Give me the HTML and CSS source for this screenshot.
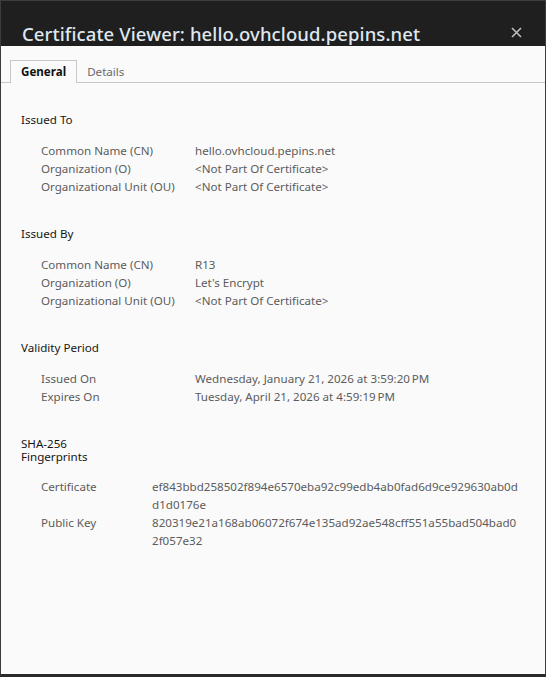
FILE: index.html
```html
<!DOCTYPE html>
<html>
<head>
<meta charset="utf-8">
<link rel="stylesheet" href="styles.css">
</head>
<body>
<div class="window">
  <header class="titlebar">
    <h1 class="title">Certificate Viewer: hello.ovhcloud.pepins.net</h1>
    <svg class="close" width="11" height="11" viewBox="0 0 11 11"><path d="M1 1 L10 10 M10 1 L1 10" stroke="#bdbdbd" stroke-width="1.6" fill="none"/></svg>
  </header>
  <nav class="tabs">
    <div class="tab active">General</div>
    <div class="tab">Details</div>
  </nav>
  <main class="content">
    <section class="section">
      <h2 class="heading">Issued To</h2>
      <dl class="grid">
        <dt>Common Name (CN)</dt><dd>hello.ovhcloud.pepins.net</dd>
        <dt>Organization (O)</dt><dd>&lt;Not Part Of Certificate&gt;</dd>
        <dt>Organizational Unit (OU)</dt><dd>&lt;Not Part Of Certificate&gt;</dd>
      </dl>
    </section>
    <section class="section">
      <h2 class="heading">Issued By</h2>
      <dl class="grid">
        <dt>Common Name (CN)</dt><dd>R13</dd>
        <dt>Organization (O)</dt><dd>Let's Encrypt</dd>
        <dt>Organizational Unit (OU)</dt><dd>&lt;Not Part Of Certificate&gt;</dd>
      </dl>
    </section>
    <section class="section">
      <h2 class="heading">Validity Period</h2>
      <dl class="grid">
        <dt>Issued On</dt><dd>Wednesday, January 21, 2026 at 3:59:20&#8239;PM</dd>
        <dt>Expires On</dt><dd>Tuesday, April 21, 2026 at 4:59:19&#8239;PM</dd>
      </dl>
    </section>
    <section class="section fp">
      <h2 class="heading narrow">SHA-256 Fingerprints</h2>
      <dl class="grid hashes">
        <dt>Certificate</dt><dd>ef843bbd258502f894e6570eba92c99edb4ab0fad6d9ce929630ab0dd1d0176e</dd>
        <dt>Public Key</dt><dd>820319e21a168ab06072f674e135ad92ae548cff551a55bad504bad02f057e32</dd>
      </dl>
    </section>
  </main>
</div>
</body>
</html>
```

FILE: styles.css
```css
* { box-sizing: border-box; }
html, body { margin: 0; padding: 0; background: #2b2b2b; }
body { font-family: "Noto Sans", "Open Sans", sans-serif; }
.window {
  width: 546px;
  height: 677px;
  display: flex;
  flex-direction: column;
  background: #fafafa;
  border: 1px solid #3c3c3c;
  border-bottom: 3px solid #2a2a2a;
  border-top: 1px solid #3d3d3d;
}
.titlebar {
  height: 45px;
  flex: none;
  background: #1f1f1f;
  display: flex;
  align-items: flex-end;
  padding: 0 23px 0 21px;
  justify-content: space-between;
}
.title {
  margin: 0 0 -2px 0;
  font-size: 18.5px;
  font-weight: 500;
  color: #dfe7ef;
  line-height: 28px;
  letter-spacing: 0.1px;
}
.close { margin-bottom: 8px; }
.tabs {
  display: flex;
  margin-top: 14px;
  padding-left: 9px;
  border-bottom: 1px solid #c8c8c8;
  height: 23px;
}
.tab {
  font-size: 11.6px;
  line-height: 22px;
  color: #6a6a6a;
  padding: 0 10px 0 9px;
  border: 1px solid transparent;
  border-bottom: none;
}
.tab.active {
  color: #111;
  font-weight: 700;
  border-color: #c8c8c8;
  background: #fafafa;
  height: 23px;
  margin-bottom: -1px;
  padding: 0 10px;
}
.content { padding: 28px 20px 0 20px; }
.section { margin-bottom: 29px; }
.heading {
  margin: 0 0 13px 0;
  font-size: 11.6px;
  font-weight: 400;
  color: #151515;
  line-height: 18px;
}
.narrow { max-width: 80px; line-height: 13px; margin-bottom: 15px; }
.grid {
  display: grid;
  grid-template-columns: 154px 1fr;
  margin: 0 0 0 20px;
  font-size: 11.6px;
  line-height: 18px;
  color: #5c5c5c;
}
.grid dt, .grid dd { margin: 0; }
.hashes { grid-template-columns: 111px 368px; }
.hashes dd { word-break: break-all; }
.fp { padding-top: 2px; }
```
